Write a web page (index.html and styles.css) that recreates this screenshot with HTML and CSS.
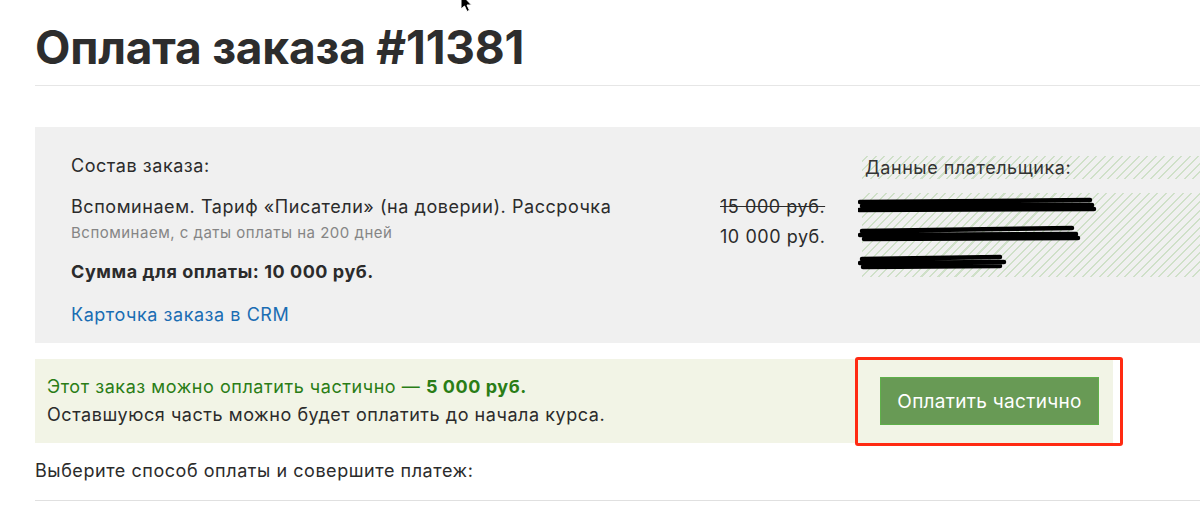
FILE: index.html
```html
<!DOCTYPE html>
<html lang="ru">
<head>
<meta charset="utf-8">
<link rel="stylesheet" href="styles.css">
</head>
<body>
<div class="page">
  <h1 class="title">Оплата заказа #11381</h1>
  <div class="order">
    <div class="order-main">
      <div class="label">Состав заказа:</div>
      <div class="item">
        <div class="item-text">
          <div class="item-name">Вспоминаем. Тариф «Писатели» (на доверии). Рассрочка</div>
          <div class="item-sub">Вспоминаем, с даты оплаты на 200 дней</div>
        </div>
        <div class="item-price">
          <div class="old-price">15 000 руб.</div>
          <div class="new-price">10 000 руб.</div>
        </div>
      </div>
      <div class="total">Сумма для оплаты: 10 000 руб.</div>
      <a class="crm-link" href="#">Карточка заказа в CRM</a>
    </div>
    <div class="payer">
      <div class="payer-label">Данные плательщика:</div>
      <div class="payer-data">
        <svg class="scribble" width="240" height="90" viewBox="0 0 240 90">
          <path d="M2 15 L232 13 M4 19 L234 18 M1 23 L236 22" stroke="#000" stroke-width="4.5" fill="none" stroke-linecap="round"/>
          <path d="M4 44 L214 41 M2 48 L218 47 M6 52 L220 51" stroke="#000" stroke-width="4.5" fill="none" stroke-linecap="round"/>
          <path d="M4 72 L142 70 M2 76 L146 75 M5 80 L142 79" stroke="#000" stroke-width="4.5" fill="none" stroke-linecap="round"/>
        </svg>
      </div>
    </div>
  </div>
  <div class="partial">
    <div class="partial-text">
      <div class="partial-line1">Этот заказ можно оплатить частично — <b>5 000 руб.</b></div>
      <div class="partial-line2">Оставшуюся часть можно будет оплатить до начала курса.</div>
    </div>
    <div class="partial-action">
      <button class="pay-btn" type="button">Оплатить частично</button>
      <div class="highlight"></div>
    </div>
  </div>
  <div class="choose">Выберите способ оплаты и совершите платеж:</div>
</div>
<svg class="cursor" width="16" height="14" viewBox="0 0 16 14">
  <path d="M2 -6 L2 9 L5.5 6 L8 11.5 L10.5 10.3 L8 5 L12.5 5 Z" fill="#000" stroke="#fff" stroke-width="1"/>
</svg>
</body>
</html>
```

FILE: styles.css
```css
html, body {
  margin: 0;
  padding: 0;
  background: #fff;
  overflow: hidden;
}
body {
  font-family: Inter, "Noto Sans", sans-serif;
  color: #2b2b2b;
  width: 1200px;
  height: 522px;
  position: relative;
}
.page {
  padding-left: 35px;
  width: 1200px;
  box-sizing: border-box;
}
.title {
  margin: 0;
  padding-top: 21px;
  height: 64px;
  font-size: 46px;
  font-weight: 700;
  letter-spacing: -0.2px;
  line-height: 52px;
  color: #2d2d2d;
  border-bottom: 1px solid #e6e6e6;
  box-sizing: content-box;
}
.order {
  margin-top: 41px;
  background: #f0f0f0;
  height: 216px;
  display: flex;
  padding-left: 36px;
  box-sizing: border-box;
}
.order-main {
  width: 791px;
  padding-top: 28px;
}
.label, .item-name, .item-price, .total, .crm-link, .payer-label,
.partial-line1, .partial-line2, .choose {
  font-size: 18px;
  letter-spacing: 0.55px;
}
.label {
  line-height: 22px;
  color: #2b2b2b;
}
.item {
  display: flex;
  margin-top: 19px;
}
.item-text {
  width: 649px;
}
.item-name {
  line-height: 22px;
}
.item-sub {
  font-size: 15px;
  letter-spacing: 0.5px;
  line-height: 18px;
  color: #858585;
  margin-top: 6px;
}
.item-price {
  line-height: 30px;
  margin-top: -4px;
}
.old-price {
  text-decoration: line-through;
}
.total {
  margin-top: 9px;
  font-weight: 700;
  line-height: 22px;
}
.crm-link {
  display: inline-block;
  margin-top: 21px;
  line-height: 22px;
  color: #1a6db3;
  text-decoration: none;
}
.payer {
  flex: 1;
  padding-top: 29px;
}
.payer-label, .payer-data {
  background-image: repeating-linear-gradient(-45deg, rgba(255,255,255,0) 0, rgba(255,255,255,0) 4.5px, #cfe0c8 4.5px, #cfe0c8 6px);
}
.payer-label {
  line-height: 23px;
  color: #333;
  padding-left: 3px;
}
.payer-data {
  margin-top: 14px;
  height: 84px;
  position: relative;
}
.scribble {
  position: absolute;
  left: -4px;
  top: -6px;
}
.partial {
  margin-top: 16px;
  width: 1078px;
  height: 84px;
  background: #f2f4e6;
  display: flex;
  align-items: center;
  justify-content: space-between;
  box-sizing: border-box;
  padding-left: 12px;
  padding-right: 14px;
}
.partial-line1 {
  color: #2a7d16;
  line-height: 28px;
}
.partial-line1 b {
  font-weight: 700;
}
.partial-line2 {
  color: #2b2b2b;
  line-height: 28px;
}
.partial-action {
  position: relative;
}
.pay-btn {
  display: block;
  width: 219px;
  height: 48px;
  background: #689a55;
  border: 1px solid #5fb04a;
  color: #fff;
  font-family: Inter, "Noto Sans", sans-serif;
  font-size: 19px;
  letter-spacing: 0.3px;
  padding: 0;
  cursor: pointer;
}
.highlight {
  position: absolute;
  left: -25px;
  top: -20px;
  width: 262px;
  height: 83px;
  border: 3px solid #ff2a12;
  border-radius: 3px;
}
.choose {
  margin-top: 17px;
  line-height: 22px;
  padding-bottom: 18px;
  border-bottom: 1px solid #e0e0e0;
}
.cursor {
  position: absolute;
  left: 459px;
  top: 0;
}
```
